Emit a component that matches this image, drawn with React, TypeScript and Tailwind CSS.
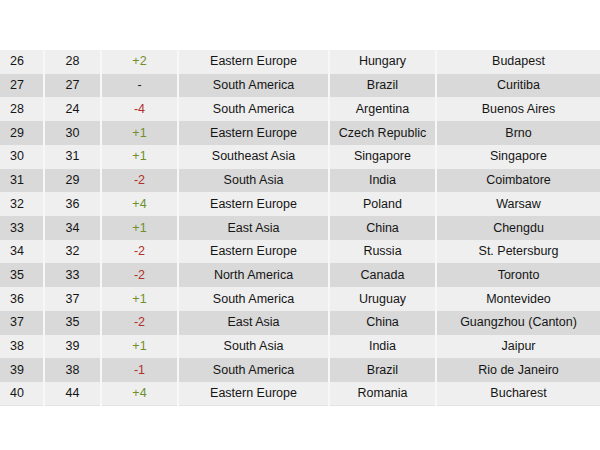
const rows: [number, number, string, string, string, string][] = [
  [26, 28, "+2", "Eastern Europe", "Hungary", "Budapest"],
  [27, 27, "-", "South America", "Brazil", "Curitiba"],
  [28, 24, "-4", "South America", "Argentina", "Buenos Aires"],
  [29, 30, "+1", "Eastern Europe", "Czech Republic", "Brno"],
  [30, 31, "+1", "Southeast Asia", "Singapore", "Singapore"],
  [31, 29, "-2", "South Asia", "India", "Coimbatore"],
  [32, 36, "+4", "Eastern Europe", "Poland", "Warsaw"],
  [33, 34, "+1", "East Asia", "China", "Chengdu"],
  [34, 32, "-2", "Eastern Europe", "Russia", "St. Petersburg"],
  [35, 33, "-2", "North America", "Canada", "Toronto"],
  [36, 37, "+1", "South America", "Uruguay", "Montevideo"],
  [37, 35, "-2", "East Asia", "China", "Guangzhou (Canton)"],
  [38, 39, "+1", "South Asia", "India", "Jaipur"],
  [39, 38, "-1", "South America", "Brazil", "Rio de Janeiro"],
  [40, 44, "+4", "Eastern Europe", "Romania", "Bucharest"],
];

const changeColor = (c: string) =>
  c.startsWith("+") ? "text-[#6f8f2a]" : c === "-" ? "text-[#222]" : "text-[#b0302a]";

const App = () => {
  return (
    <div className="w-[600px] h-[450px] bg-white pt-[50px] font-['Liberation_Sans',Arial,sans-serif] text-[12.5px] text-[#151515]">
      <table className="w-full border-collapse table-fixed border-b border-[#e2e2e2]">
        <colgroup>
          <col className="w-[44px]" />
          <col className="w-[57px]" />
          <col className="w-[77px]" />
          <col className="w-[151px]" />
          <col className="w-[107px]" />
          <col />
        </colgroup>
        <tbody>
          {rows.map((r, i) => (
            <tr
              key={r[0]}
              className={i % 2 === 0 ? "bg-[#efefef] h-[23.73px]" : "bg-[#d9d9d9] h-[23.73px]"}
            >
              <td className="pl-[10px] p-0 border-r-2 border-[#f7f7f7]">{r[0]}</td>
              <td className="p-0 text-center border-r-2 border-[#f7f7f7]">{r[1]}</td>
              <td className={`p-0 text-center border-r-2 border-[#f7f7f7] ${changeColor(r[2])}`}>{r[2]}</td>
              <td className="p-0 text-center border-r-2 border-[#f7f7f7]">{r[3]}</td>
              <td className="p-0 text-center border-r-2 border-[#f7f7f7]">{r[4]}</td>
              <td className="p-0 text-center">{r[5]}</td>
            </tr>
          ))}
        </tbody>
      </table>
    </div>
  );
};

export default App;
